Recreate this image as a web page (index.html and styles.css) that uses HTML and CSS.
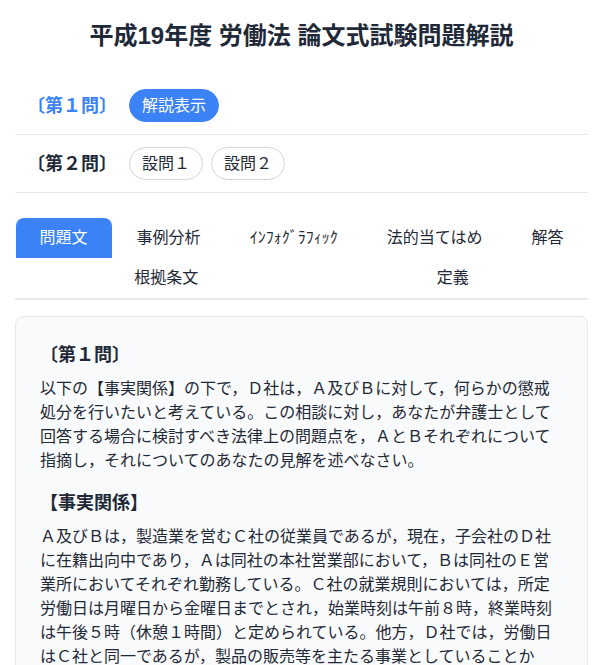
FILE: index.html
```html
<!DOCTYPE html>
<html lang="ja">
<head>
<meta charset="utf-8">
<title>平成19年度 労働法 論文式試験問題解説</title>
<link rel="stylesheet" href="styles.css">
</head>
<body>
<div class="page">
  <h1 class="title">平成19年度 労働法 論文式試験問題解説</h1>

  <div class="q-row">
    <span class="q-label q-label-active">〔第１問〕</span>
    <div class="pills">
      <button class="pill pill-active">解説表示</button>
    </div>
  </div>

  <div class="q-row">
    <span class="q-label">〔第２問〕</span>
    <div class="pills">
      <button class="pill">設問１</button>
      <button class="pill">設問２</button>
    </div>
  </div>

  <nav class="tabs">
    <span class="tab tab-active">問題文</span>
    <span class="tab">事例分析</span>
    <span class="tab">ｲﾝﾌｫｸﾞﾗﾌｨｯｸ</span>
    <span class="tab">法的当てはめ</span>
    <span class="tab">解答</span>
    <span class="tab">根拠条文</span>
    <span class="tab">定義</span>
  </nav>

  <section class="card">
    <h2 class="card-heading">〔第１問〕</h2>
    <p class="card-text">以下の【事実関係】の下で，Ｄ社は，Ａ及びＢに対して，何らかの懲戒処分を行いたいと考えている。この相談に対し，あなたが弁護士として回答する場合に検討すべき法律上の問題点を，ＡとＢそれぞれについて指摘し，それについてのあなたの見解を述べなさい。</p>
    <h2 class="card-heading">【事実関係】</h2>
    <p class="card-text">Ａ及びＢは，製造業を営むＣ社の従業員であるが，現在，子会社のＤ社に在籍出向中であり，Ａは同社の本社営業部において，Ｂは同社のＥ営業所においてそれぞれ勤務している。Ｃ社の就業規則においては，所定労働日は月曜日から金曜日までとされ，始業時刻は午前８時，終業時刻は午後５時（休憩１時間）と定められている。他方，Ｄ社では，労働日はＣ社と同一であるが，製品の販売等を主たる事業としていることから，始業時刻は午前９時，終業時刻は午後６時（休憩１時間）と定められている。</p>
  </section>
</div>
</body>
</html>
```

FILE: styles.css
```css
html, body {
  margin: 0;
  padding: 0;
  background: #ffffff;
}

body {
  font-family: "Liberation Sans", "Noto Sans CJK JP", sans-serif;
  color: #1f2937;
  font-size: 16px;
}

.page {
  padding: 0 15px;
}

.title {
  margin: 20px 0 25px;
  font-size: 24px;
  line-height: 32px;
  font-weight: 700;
  text-align: center;
  color: #1f2937;
}

.q-row {
  display: flex;
  align-items: center;
  gap: 12px;
  padding: 12px;
  border-bottom: 1px solid #e5e7eb;
}

.q-label {
  font-size: 18px;
  line-height: 28px;
  font-weight: 700;
  color: #1f2937;
}

.q-label-active {
  color: #3b82f6;
}

.pills {
  display: flex;
  gap: 8px;
}

.pill {
  font-family: inherit;
  font-size: 16px;
  line-height: 19px;
  padding: 6px 12px;
  border: 1px solid #d1d5db;
  border-radius: 9999px;
  background: #ffffff;
  color: #1f2937;
}

.pill-active {
  background: #3b82f6;
  border-color: #3b82f6;
  color: #ffffff;
}

.tabs {
  margin-top: 25px;
  display: flex;
  flex-wrap: wrap;
  justify-content: space-around;
  border-bottom: 2px solid #e5e7eb;
}

.tab {
  padding: 8px 24px;
  line-height: 24px;
  font-size: 16px;
  color: #1f2937;
  border-radius: 8px 8px 0 0;
  white-space: nowrap;
}

.tab-active {
  background: #3b82f6;
  color: #ffffff;
}

.card {
  margin-top: 16px;
  padding: 24px;
  background: #f9fafb;
  border: 1px solid #e5e7eb;
  border-radius: 8px;
}

.card-heading {
  margin: 0 0 8px;
  font-size: 18px;
  line-height: 28px;
  font-weight: 700;
  color: #1f2937;
}

.card-text {
  margin: 0 0 16px;
  font-size: 16px;
  line-height: 24px;
  color: #1f2937;
}
```
